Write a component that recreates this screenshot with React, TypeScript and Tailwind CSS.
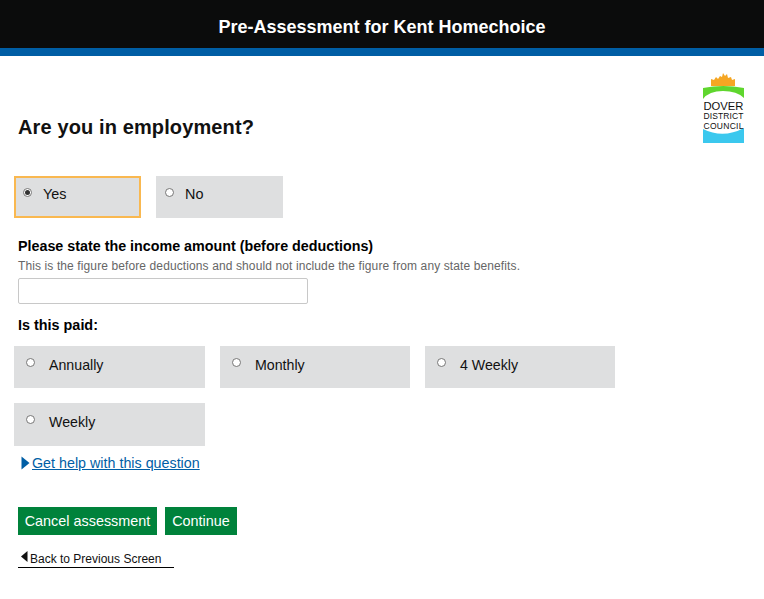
const sans = "font-['Liberation_Sans',Arial,sans-serif]";

function Logo() {
  return (
    <svg width="41" height="70" viewBox="0 0 41 70" className="block">
      <path d="M8 13 L8 6 L11 7 L13 4 L15 6 L17 3 L19 4 L20 0 L22 3 L24 1 L25 5 L28 4 L29 7 L32 6 L32 13 Z" fill="#f5a623" />
      <path d="M0 26 L0 15 Q20 11 41 15 L41 25 Q34 18 20 18 Q6 18 0 26 Z" fill="#5fd62e" />
      <path d="M0 70 L0 56 Q20 66 41 55 L41 70 Z" fill="#3bc8ee" />
      <g fontFamily="'Liberation Sans',Arial,sans-serif" fill="#111">
        <text x="0.5" y="37" fontSize="11" textLength="40" lengthAdjust="spacingAndGlyphs">DOVER</text>
        <text x="0.5" y="46" fontSize="8.5" textLength="40" lengthAdjust="spacing">DISTRICT</text>
        <text x="0.5" y="55.5" fontSize="8.5" textLength="40" lengthAdjust="spacing">COUNCIL</text>
      </g>
    </svg>
  );
}

function RadioOption({ label, checked, focused, wide, className }: { label: string; checked?: boolean; focused?: boolean; wide?: boolean; className?: string }) {
  const boxClass = focused
    ? "w-[127px] h-[42px] border-2 border-[#f9b850] pl-[7px]"
    : wide
      ? "h-[42px] pl-[12px]"
      : "w-[127px] h-[42px] pl-[9px]";
  const dotTop = focused ? "mt-[10px]" : "mt-[12px]";
  const textClass = focused
    ? "text-[14.4px] ml-[11px] mt-[7px]"
    : wide
      ? "text-[14.2px] ml-[14px] mt-[10px]"
      : "text-[14.4px] ml-[11px] mt-[9px]";
  return (
    <label className={`flex items-start bg-[#dedfe0] ${boxClass} ${className ?? ""}`}>
      <span className={`w-[9px] h-[9px] rounded-full border border-[#767676] bg-white flex items-center justify-center shrink-0 ${dotTop}`}>
        {checked && <span className="w-[5px] h-[5px] rounded-full bg-[#333]" />}
      </span>
      <span className={`leading-[18px] text-[#111] ${textClass}`}>{label}</span>
    </label>
  );
}

export default function App() {
  return (
    <div className={`min-h-[599px] bg-white ${sans}`}>
      {/* Header */}
      <header className="h-[56px] bg-[#0b0c0c] border-b-[8px] border-[#005ea5] flex items-center justify-center">
        <h1 className="text-[18px] font-bold text-white pt-[7px]">Pre-Assessment for Kent Homechoice</h1>
      </header>

      <main className="relative">
        <div className="absolute right-[20px] top-[17px]">
          <Logo />
        </div>

        <h2 className="pt-[59px] pl-[18px] text-[20px] leading-[24px] font-bold text-[#111] tracking-[0.12px]">Are you in employment?</h2>

        <div className="flex gap-[15px] pl-[14px] mt-[37px]">
          <RadioOption label="Yes" checked focused />
          <RadioOption label="No" />
        </div>

        <div className="pl-[18px] mt-[20px]">
          <p className="text-[14.3px] leading-[17px] font-bold text-black">Please state the income amount (before deductions)</p>
          <p className="text-[12px] leading-[14px] text-[#666] mt-[4px] tracking-[0.11px]">This is the figure before deductions and should not include the figure from any state benefits.</p>
          <input type="text" className="block w-[290px] h-[26px] mt-[5px] bg-white border border-[#c8c8c8] rounded-[2px]" />
          <p className="text-[14.4px] leading-[17px] font-bold text-black mt-[13px]">Is this paid:</p>
        </div>

        <div className="grid grid-cols-[191px_190px_190px] gap-x-[15px] gap-y-[15px] pl-[14px] mt-[12px]">
          <RadioOption label="Annually" wide />
          <RadioOption label="Monthly" wide />
          <RadioOption label="4 Weekly" wide />
          <RadioOption label="Weekly" wide className="h-[43px]" />
        </div>

        <div className="flex items-center pl-[21px] mt-[8px]">
          <svg width="9" height="14" viewBox="0 0 9 14" className="block">
            <path d="M0.5 0.5 L8.5 7 L0.5 13.5 Z" fill="#005ea5" />
          </svg>
          <a href="#" className="ml-[2px] text-[14.3px] leading-[18px] text-[#005ea5] underline">Get help with this question</a>
        </div>

        <div className="flex gap-[8px] pl-[18px] mt-[35px]">
          <button className="h-[28px] w-[139px] bg-[#00823b] text-white text-[14.4px] flex items-center justify-center pt-[1px]">Cancel assessment</button>
          <button className="h-[28px] w-[72px] bg-[#00823b] text-white text-[14.4px] flex items-center justify-center pt-[1px]">Continue</button>
        </div>

        <div className="ml-[18px] mt-[15px] w-[156px] h-[18px] border-b border-black flex items-start">
          <svg width="8" height="11" viewBox="0 0 8 11" className="block ml-[3px] mt-[1px]">
            <path d="M6.5 0 L0 5.5 L6.5 11 Z" fill="#111" />
          </svg>
          <a href="#" className="ml-[1px] mt-[1px] text-[12px] leading-[16px] text-[#111]">Back to Previous Screen</a>
        </div>
      </main>
    </div>
  );
}
